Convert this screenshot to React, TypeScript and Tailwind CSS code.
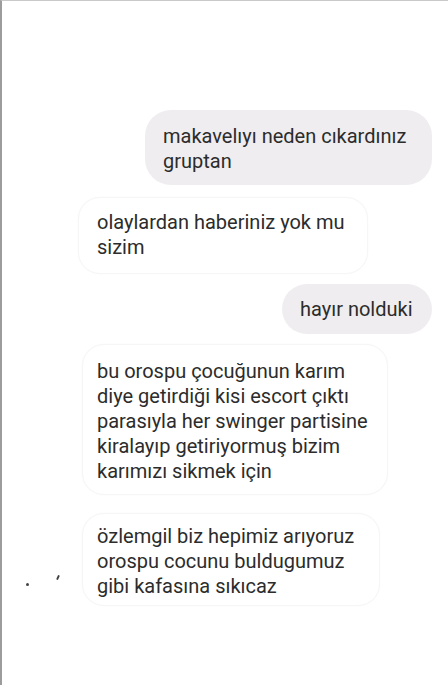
const sent = "rounded-[26px] bg-[#efedf0] text-[#2c2c2c]";
const received =
  "rounded-[22px] border border-[#f6f6f6] bg-white text-[#2c2c2c] shadow-[0_0_2px_rgba(0,0,0,0.03)]";

export default function App() {
  return (
    <div
      className="h-[685px] w-[448px] overflow-hidden border-l-2 border-t border-l-[#9c9c9c] border-t-[#c9c9c9] bg-white text-[20px] leading-[25px]"
      style={{ fontFamily: "Roboto, 'Noto Sans', sans-serif" }}
    >
      <div className="flex flex-col">
        <div className={`ml-[143px] mt-[109px] w-[287px] whitespace-nowrap pb-[11px] pl-[18px] pt-[14px] ${sent}`}>
          makavelıyı neden cıkardınız
          <br />
          gruptan
        </div>

        <div className={`ml-[76px] mt-[12px] w-[290px] whitespace-nowrap pb-[13px] pl-[18px] pt-[12px] ${received}`}>
          olaylardan haberiniz yok mu
          <br />
          sizim
        </div>

        <div className={`ml-[280px] mt-[10px] w-[150px] whitespace-nowrap pb-[12px] pl-[18px] pt-[13px] ${sent}`}>
          hayır nolduki
        </div>

        <div className={`ml-[80px] mt-[10px] w-[306px] whitespace-nowrap pb-[10px] pl-[14px] pt-[14px] ${received}`}>
          bu orospu çocuğunun karım
          <br />
          diye getirdiği kisi escort çıktı
          <br />
          parasıyla her swinger partisine
          <br />
          kiralayıp getiriyormuş bizim
          <br />
          karımızı sikmek için
        </div>

        <div className="flex items-start">
          <div className="ml-[24px] mt-[88px] h-[3px] w-[3px] rounded-full bg-[#444]" />
          <div className="ml-[28px] mt-[80px] h-[5px] w-[2px] rotate-[25deg] rounded-full bg-[#444]" />
          <div className={`ml-[23px] mt-[18px] w-[298px] whitespace-nowrap pb-[6px] pl-[14px] pt-[10px] ${received}`}>
            özlemgil biz hepimiz arıyoruz
            <br />
            orospu cocunu buldugumuz
            <br />
            gibi kafasına sıkıcaz
          </div>
        </div>
      </div>
    </div>
  );
}
